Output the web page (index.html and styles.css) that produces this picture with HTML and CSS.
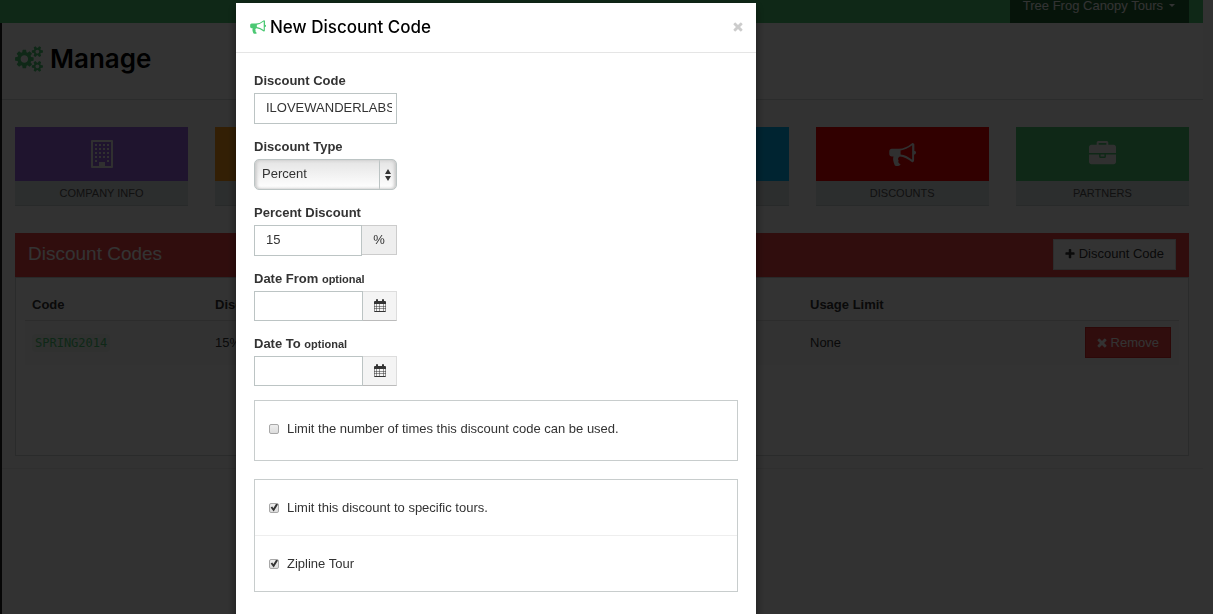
FILE: index.html
```html
<!DOCTYPE html>
<html lang="en">
<head>
<meta charset="utf-8">
<title>Manage - Discount Codes</title>
<link rel="stylesheet" href="styles.css">
</head>
<body>
<svg class="sprite" aria-hidden="true">
  <symbol id="bullhorn" viewBox="0 0 1792 1792"><path d="M1664 640q53 0 90.500 37.500t37.500 90.500-37.500 90.500-90.500 37.500v384q0 52-38 90t-90 38q-417-347-812-380-58 19-91 66t-31 100.500 40 92.500q-20 33-23 65.500t6 58 33.500 55 48 50 61.500 50.500q-29 58-111.500 83t-168.500 11.500-113.500-55.500q-7-23-29.500-87.500t-32-94.500-23-89-15-101 3.500-98.500 22-110.500h-122q-66 0-113-47t-47-113v-192q0-66 47-113t113-47h480q435 0 896-384 52 0 90 38t38 90v384zm-128 604v-954q-394 302-768 343v270q377 42 768 341z"/></symbol>
  <symbol id="briefcase" viewBox="0 0 1792 1792"><path d="M640 256h512v-128h-512v128zm1152 640v480q0 66-47 113t-113 47h-1472q-66 0-113-47t-47-113v-480h672v160q0 26 19 45t45 19h320q26 0 45-19t19-45v-160h672zm-768 0v128h-256v-128h256zm768-480v384h-1792v-384q0-66 47-113t113-47h352v-160q0-40 28-68t68-28h576q40 0 68 28t28 68v160h352q66 0 113 47t47 113z"/></symbol>
  <symbol id="cogs" viewBox="0 0 1920 1792"><path d="M896 896q0-106-75-181t-181-75-181 75-75 181 75 181 181 75 181-75 75-181zm768 512q0-52-38-90t-90-38-90 38-38 90q0 53 37.500 90.500t90.500 37.500 90.500-37.500 37.500-90.500zm0-1024q0-52-38-90t-90-38-90 38-38 90q0 53 37.500 90.500t90.500 37.500 90.500-37.500 37.500-90.500zm-384 421v185q0 10-7 19.500t-16 10.500l-155 24q-11 35-32 76 34 48 90 115 7 11 7 20 0 12-7 19-23 30-82.500 89.500t-78.500 59.500q-11 0-21-7l-115-90q-37 19-77 31-11 108-23 155-7 24-30 24h-186q-11 0-20-7.500t-10-17.500l-23-153q-34-10-75-31l-118 89q-7 7-20 7-11 0-21-8-144-133-144-160 0-9 7-19 10-14 41-53t47-61q-23-44-35-82l-152-24q-10-1-17-9.500t-7-19.500v-185q0-10 7-19.500t16-10.500l155-24q11-35 32-76-34-48-90-115-7-11-7-20 0-12 7-20 22-30 82-89t79-59q11 0 21 7l115 90q34-18 77-32 11-108 23-154 7-24 30-24h186q11 0 20 7.500t10 17.500l23 153q34 10 75 31l118-89q8-7 20-7 11 0 21 8 144 133 144 160 0 8-7 19-12 16-42 54t-45 60q23 48 34 82l152 23q10 2 17 10.500t7 19.500zm640 533v140q0 16-149 31-12 27-30 52 51 113 51 138 0 4-4 7-122 71-124 71-8 0-46-47t-52-68q-20 2-30 2t-30-2q-14 21-52 68t-46 47q-2 0-124-71-4-3-4-7 0-25 51-138-18-25-30-52-149-15-149-31v-140q0-16 149-31 13-29 30-52-51-113-51-138 0-4 4-7 4-2 35-20t59-34 30-16q8 0 46 46.500t52 67.500q20-2 30-2t30 2q51-71 92-112l6-2q4 0 124 70 4 3 4 7 0 25-51 138 17 23 30 52 149 15 149 31zm0-1024v140q0 16-149 31-12 27-30 52 51 113 51 138 0 4-4 7-122 71-124 71-8 0-46-47t-52-68q-20 2-30 2t-30-2q-14 21-52 68t-46 47q-2 0-124-71-4-3-4-7 0-25 51-138-18-25-30-52-149-15-149-31v-140q0-16 149-31 13-29 30-52-51-113-51-138 0-4 4-7 4-2 35-20t59-34 30-16q8 0 46 46.500t52 67.500q20-2 30-2t30 2q51-71 92-112l6-2q4 0 124 70 4 3 4 7 0 25-51 138 17 23 30 52 149 15 149 31z"/></symbol>
  <symbol id="plus" viewBox="128 128 1536 1536"><path d="M1600 736v192q0 40-28 68t-68 28h-416v416q0 40-28 68t-68 28h-192q-40 0-68-28t-28-68v-416h-416q-40 0-68-28t-28-68v-192q0-40 28-68t68-28h416v-416q0-40 28-68t68-28h192q40 0 68 28t28 68v416h416q40 0 68 28t28 68z"/></symbol>
  <symbol id="times" viewBox="240 300 1312 1312"><path d="M1490 1322q0 40-28 68l-136 136q-28 28-68 28t-68-28l-294-294-294 294q-28 28-68 28t-68-28l-136-136q-28-28-28-68t28-68l294-294-294-294q-28-28-28-68t28-68l136-136q28-28 68-28t68 28l294 294 294-294q28-28 68-28t68 28l136 136q28 28 28 68t-28 68l-294 294 294 294q28 28 28 68z"/></symbol>
  <symbol id="building" viewBox="0 0 22 28"><path fill-rule="evenodd" d="M1 0h20q1 0 1 1v26q0 1-1 1H1q-1 0-1-1V1q0-1 1-1zM2 2v24h6v-4h6v4h6V2z"/><path d="M4 4h2v2H4zM8 4h2v2H8zM12 4h2v2h-2zM16 4h2v2h-2zM4 8h2v2H4zM8 8h2v2H8zM12 8h2v2h-2zM16 8h2v2h-2zM4 12h2v2H4zM8 12h2v2H8zM12 12h2v2h-2zM16 12h2v2h-2zM4 16h2v2H4zM8 16h2v2H8zM12 16h2v2h-2zM16 16h2v2h-2zM4 20h2v2H4zM16 20h2v2h-2z"/></symbol>
  <symbol id="calendar" viewBox="0 0 24 26"><path fill-rule="evenodd" d="M2 4h2V2q0-2 2-2t2 2v2h8V2q0-2 2-2t2 2v2h2q2 0 2 2v18q0 2-2 2H2q-2 0-2-2V6q0-2 2-2zM1 10v4h4v-4zM6 10v4h5v-4zM12 10v4h6v-4zM19 10v4h4v-4zM1 15v4h4v-4zM6 15v4h5v-4zM12 15v4h6v-4zM19 15v4h4v-4zM1 20v4h4v-4zM6 20v4h5v-4zM12 20v4h6v-4zM19 20v4h4v-4z"/></symbol>
  <symbol id="updown" viewBox="0 0 6 12"><path d="M3 0l3 5H0zM0 7h6l-3 5z"/></symbol>
</svg>

<div class="shell">
  <nav class="topbar">
    <button type="button" class="account">Tree Frog Canopy Tours <span class="caret"></span></button>
  </nav>
  <header class="page-head">
    <svg class="cogs"><use href="#cogs"/></svg>
    <h1>Manage</h1>
  </header>
  <main class="content">
    <div class="tiles">
      <a class="tile" href="#company"><span class="tile-icon purple"><svg class="i-building"><use href="#building"/></svg></span><span class="tile-label">COMPANY INFO</span></a>
      <a class="tile" href="#second" aria-label="Second section"><span class="tile-icon orange"></span><span class="tile-label"></span></a>
      <a class="tile" href="#third" aria-label="Third section"><span class="tile-icon blue"></span><span class="tile-label"></span></a>
      <a class="tile" href="#fourth" aria-label="Fourth section"><span class="tile-icon blue"></span><span class="tile-label"></span></a>
      <a class="tile" href="#discounts"><span class="tile-icon red"><svg class="i-tile"><use href="#bullhorn"/></svg></span><span class="tile-label">DISCOUNTS</span></a>
      <a class="tile" href="#partners"><span class="tile-icon green"><svg class="i-tile"><use href="#briefcase"/></svg></span><span class="tile-label">PARTNERS</span></a>
    </div>
    <section class="panel">
      <div class="panel-head">
        <h2>Discount Codes</h2>
        <button type="button" class="btn"><svg class="i-small"><use href="#plus"/></svg>Discount Code</button>
      </div>
      <div class="panel-body">
        <table class="codes">
          <thead><tr><th class="c-code">Code</th><th class="c-disc">Discount</th><th>Usage Limit</th><th></th></tr></thead>
          <tbody><tr><td><code>SPRING2014</code></td><td>15%</td><td>None</td><td class="c-act"><button type="button" class="btn danger"><svg class="i-small"><use href="#times"/></svg>Remove</button></td></tr></tbody>
        </table>
      </div>
    </section>
  </main>
</div>

<div class="backdrop">
  <div class="modal" role="dialog" aria-labelledby="modal-title">
    <div class="modal-head">
      <svg class="i-title"><use href="#bullhorn"/></svg>
      <h3 id="modal-title">New Discount Code</h3>
      <button type="button" class="close" aria-label="Close"><svg class="i-close"><use href="#times"/></svg></button>
    </div>
    <form class="modal-body">
      <div class="field">
        <label for="code">Discount Code</label>
        <input class="text" id="code" type="text" value="ILOVEWANDERLABS">
      </div>
      <div class="field">
        <label for="type">Discount Type</label>
        <div class="select">
          <select id="type"><option>Percent</option></select>
          <svg class="i-updown"><use href="#updown"/></svg>
        </div>
      </div>
      <div class="field">
        <label for="percent">Percent Discount</label>
        <div class="group"><input class="text" id="percent" type="text" value="15"><span class="addon">%</span></div>
      </div>
      <div class="field">
        <label for="from">Date From <small>optional</small></label>
        <div class="group date"><input class="text" id="from" type="text"><button type="button" class="addon pick" aria-label="Pick start date"><svg class="i-cal"><use href="#calendar"/></svg></button></div>
      </div>
      <div class="field">
        <label for="to">Date To <small>optional</small></label>
        <div class="group date"><input class="text" id="to" type="text"><button type="button" class="addon pick" aria-label="Pick end date"><svg class="i-cal"><use href="#calendar"/></svg></button></div>
      </div>
      <div class="box single">
        <label class="check"><input type="checkbox">Limit the number of times this discount code can be used.</label>
      </div>
      <div class="box">
        <label class="check"><input type="checkbox" checked>Limit this discount to specific tours.</label>
        <label class="check"><input type="checkbox" checked>Zipline Tour</label>
      </div>
    </form>
  </div>
</div>
</body>
</html>
```
FILE: styles.css
```css
* { box-sizing: border-box; }
body {
  margin: 0;
  height: 100vh;
  overflow: hidden;
  background: #f7f7f7;
  color: #333;
  font: 13px/18px "Liberation Sans", Arial, sans-serif;
}
h1, h2, h3 { margin: 0; }
button, input, select { font: inherit; color: inherit; }
svg { fill: currentColor; flex: none; }
.sprite { display: none; }

.shell {
  min-height: 100vh;
  margin-right: 10px;
  border-left: 2px solid #222;
}
.topbar {
  display: flex;
  justify-content: flex-end;
  height: 23px;
  margin-left: -2px;
  padding-right: 14px;
  background: #4bc873;
}
.account {
  display: flex;
  align-items: center;
  gap: 6px;
  padding: 0 14px 12px 13px;
  border: 0;
  background: #1e6432;
  color: #fff;
  line-height: 11px;
}
.caret { border: 3px solid transparent; border-top-color: #fff; border-bottom: 0; }
.page-head {
  display: flex;
  align-items: center;
  gap: 7px;
  height: 77px;
  padding: 0 13px 4px;
  background: #fff;
  border-bottom: 1px solid #d5dada;
}
.cogs { width: 28px; height: 26px; color: #4bc873; }
.page-head h1 { font: 600 26px/32px Inter, sans-serif; color: #000; }
.content { padding: 27px 14px 12px 13px; border-bottom: 1px solid #e8e8e8; }

.tiles {
  display: grid;
  grid-template-columns: repeat(6, 1fr);
  gap: 27px;
  margin-bottom: 27px;
}
.tile { color: #555; font-size: 11px; text-decoration: none; }
.tile-icon { display: flex; align-items: center; justify-content: center; height: 54px; color: #f0f0f0; }
.tile-label {
  display: block;
  height: 25px;
  line-height: 24px;
  text-align: center;
  background: #dde3e3;
  border-bottom: 1px solid #c8d0d0;
}
.purple { background: #9b66e6; }
.orange { background: #ff9c1a; }
.blue { background: #00b5f5; }
.red { background: #f50000; }
.green { background: #4bc873; }
.i-building { width: 22px; height: 28px; }
.i-tile { width: 27px; height: 27px; }

.panel { min-height: 223px; background: #fff; border: 1px solid #d0d5d5; border-top: 0; }
.panel-head {
  display: flex;
  align-items: center;
  justify-content: space-between;
  height: 45px;
  margin: 0 -1px;
  padding: 0 13px 2px;
  background: #f04343;
  border-bottom: 1px solid #ccc;
}
.panel-head h2 { font-size: 19px; font-weight: 400; line-height: 24px; color: #fff; }
.btn {
  display: inline-flex;
  align-items: center;
  gap: 4px;
  height: 31px;
  padding: 0 11px;
  background: #fff;
  border: 1px solid #ddd;
}
.danger { background: #f04343; border-color: #d92c2c; color: #fff; }
.i-small { width: 10px; height: 10px; }
.panel-body { padding: 9px; }
.codes { width: 100%; border-collapse: collapse; }
.codes th { height: 33px; padding: 4px 7px 0; text-align: left; border-bottom: 1px solid #ddd; }
.codes td { height: 45px; padding: 0 8px 0 7px; background: #f9f9f9; }
.c-code { width: 183px; }
.c-disc { width: 595px; }
.codes .c-act { text-align: right; }
code {
  padding: 2px 3px;
  border-radius: 4px;
  background: #edf3f0;
  color: #4bc873;
  font: 12px/18px "DejaVu Sans Mono", monospace;
}

.backdrop {
  position: fixed;
  inset: 0;
  padding: 3px 16px 0 236px;
  background: rgba(0, 0, 0, 0.8);
}
.modal {
  max-width: 520px;
  min-height: 100%;
  background: #fff;
  box-shadow: 0 3px 9px rgba(0, 0, 0, 0.5);
}
.modal-head {
  display: flex;
  align-items: center;
  gap: 4px;
  height: 50px;
  padding: 0 13px 2px 14px;
  border-bottom: 1px solid #e5e5e5;
}
.modal-head h3 { flex: 1; font: 500 17px/24px Inter, sans-serif; color: #000; }
.i-title { width: 16px; height: 16px; color: #4bc873; }
.close { display: flex; padding: 0; border: 0; background: none; color: #ccc; }
.i-close { width: 10px; height: 10px; }

.modal-body { padding: 19px 18px; }
.field { width: 143px; margin-bottom: 14px; }
.field label { display: block; margin-bottom: 3px; font-weight: 700; white-space: nowrap; }
.field small { font-size: 11px; }
.text {
  display: block;
  width: 100%;
  min-width: 0;
  height: 31px;
  padding: 0 4px 2px 11px;
  border: 1px solid #bcc4c4;
  background: #fff;
}
.select { position: relative; }
.select select {
  display: block;
  width: 100%;
  height: 31px;
  padding: 0 24px 2px 7px;
  appearance: none;
  border: 1px solid #bcc4c4;
  border-radius: 5px;
  background: linear-gradient(#bcc4c4, #bcc4c4) right 16px top / 1px 100% no-repeat, linear-gradient(#e4e4e4, #fff);
  box-shadow: inset 2px 0 3px #ccc, inset -2px 0 3px #ccc;
}
.i-updown { position: absolute; right: 6px; top: 10px; width: 6px; height: 12px; pointer-events: none; }
.group { display: flex; align-items: flex-start; }
.group .text { flex: 1; }
.addon {
  display: flex;
  align-items: center;
  justify-content: center;
  width: 35px;
  height: 30px;
  padding: 0;
  background: #eee;
  border: 1px solid #ccc;
  border-left: 0;
}
.date .text { height: 30px; }
.pick { width: 34px; padding-bottom: 2px; background: #f4f4f4; border-color: #ddd; border-bottom-color: #bbb; }
.i-cal { width: 12px; height: 13px; }

.box { margin-bottom: 18px; border: 1px solid #c8cdcd; }
.single { padding-bottom: 4px; }
.check { display: flex; align-items: center; gap: 8px; height: 55px; padding: 0 14px; }
.check + .check { height: 56px; border-top: 1px solid #eee; }
.check input {
  display: grid;
  place-items: center;
  width: 10px;
  height: 10px;
  margin: 0;
  appearance: none;
  border: 1px solid #a8a8a8;
  border-radius: 2px;
  background: linear-gradient(#eee, #ddd);
}
.check input:checked::after {
  content: "";
  width: 8px;
  height: 8px;
  background: #333;
  clip-path: polygon(8% 50%, 28% 38%, 42% 58%, 78% 0, 100% 12%, 46% 100%);
}
```
